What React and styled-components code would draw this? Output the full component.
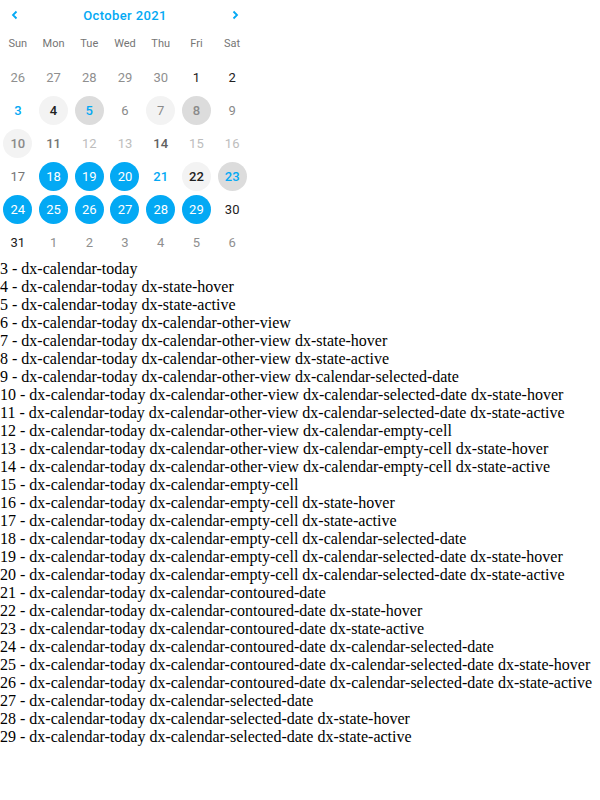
import { createGlobalStyle, styled } from "styled-components";

const GlobalStyle = createGlobalStyle`
  body {
    margin: 0;
    background: #fff;
  }
`;

const BLUE = "#03a9f4";

const weekDays = ["Sun", "Mon", "Tue", "Wed", "Thu", "Fri", "Sat"];

// each cell: [text, kind]
const kinds = {
  other: { color: "#8f8f8f" },
  normal: { color: "#212121" },
  today: { color: BLUE, bold: true },
  todayHover: { color: "#212121", bold: true, bg: "#f3f3f3" },
  todayActive: { color: BLUE, bold: true, bg: "#dcdcdc" },
  gray: { color: "#8a8a8a" },
  grayHover: { color: "#8a8a8a", bg: "#f3f3f3" },
  grayActive: { color: "#8a8a8a", bold: true, bg: "#dcdcdc" },
  grayBoldHover: { color: "#8a8a8a", bold: true, bg: "#f3f3f3" },
  grayBold: { color: "#757575", bold: true },
  empty: { color: "#bdbdbd" },
  darkGrayBold: { color: "#616161", bold: true },
  selected: { color: "#fff", bg: BLUE },
  contoured: { color: BLUE, bold: true },
  contouredHover: { color: "#212121", bold: true, bg: "#f3f3f3" },
  contouredActive: { color: BLUE, bold: true, bg: "#dcdcdc" },
  muted: { color: "#757575" },
};

const weeks = [
  [["26", "other"], ["27", "other"], ["28", "other"], ["29", "other"], ["30", "other"], ["1", "normal"], ["2", "normal"]],
  [["3", "today"], ["4", "todayHover"], ["5", "todayActive"], ["6", "gray"], ["7", "grayHover"], ["8", "grayActive"], ["9", "gray"]],
  [["10", "grayBoldHover"], ["11", "grayBold"], ["12", "empty"], ["13", "empty"], ["14", "darkGrayBold"], ["15", "empty"], ["16", "empty"]],
  [["17", "muted"], ["18", "selected"], ["19", "selected"], ["20", "selected"], ["21", "contoured"], ["22", "contouredHover"], ["23", "contouredActive"]],
  [["24", "selected"], ["25", "selected"], ["26", "selected"], ["27", "selected"], ["28", "selected"], ["29", "selected"], ["30", "normal"]],
  [["31", "normal"], ["1", "other"], ["2", "other"], ["3", "other"], ["4", "other"], ["5", "other"], ["6", "other"]],
];

const notes = [
  "3 - dx-calendar-today",
  "4 - dx-calendar-today dx-state-hover",
  "5 - dx-calendar-today dx-state-active",
  "6 - dx-calendar-today dx-calendar-other-view",
  "7 - dx-calendar-today dx-calendar-other-view dx-state-hover",
  "8 - dx-calendar-today dx-calendar-other-view dx-state-active",
  "9 - dx-calendar-today dx-calendar-other-view dx-calendar-selected-date",
  "10 - dx-calendar-today dx-calendar-other-view dx-calendar-selected-date dx-state-hover",
  "11 - dx-calendar-today dx-calendar-other-view dx-calendar-selected-date dx-state-active",
  "12 - dx-calendar-today dx-calendar-other-view dx-calendar-empty-cell",
  "13 - dx-calendar-today dx-calendar-other-view dx-calendar-empty-cell dx-state-hover",
  "14 - dx-calendar-today dx-calendar-other-view dx-calendar-empty-cell dx-state-active",
  "15 - dx-calendar-today dx-calendar-empty-cell",
  "16 - dx-calendar-today dx-calendar-empty-cell dx-state-hover",
  "17 - dx-calendar-today dx-calendar-empty-cell dx-state-active",
  "18 - dx-calendar-today dx-calendar-empty-cell dx-calendar-selected-date",
  "19 - dx-calendar-today dx-calendar-empty-cell dx-calendar-selected-date dx-state-hover",
  "20 - dx-calendar-today dx-calendar-empty-cell dx-calendar-selected-date dx-state-active",
  "21 - dx-calendar-today dx-calendar-contoured-date",
  "22 - dx-calendar-today dx-calendar-contoured-date dx-state-hover",
  "23 - dx-calendar-today dx-calendar-contoured-date dx-state-active",
  "24 - dx-calendar-today dx-calendar-contoured-date dx-calendar-selected-date",
  "25 - dx-calendar-today dx-calendar-contoured-date dx-calendar-selected-date dx-state-hover",
  "26 - dx-calendar-today dx-calendar-contoured-date dx-calendar-selected-date dx-state-active",
  "27 - dx-calendar-today dx-calendar-selected-date",
  "28 - dx-calendar-today dx-calendar-selected-date dx-state-hover",
  "29 - dx-calendar-today dx-calendar-selected-date dx-state-active",
];

const Chevron = ({ left }) => (
  <svg width="10" height="10" viewBox="0 0 10 10">
    <polyline
      points={left ? "6.5,1.5 3,5 6.5,8.5" : "3.5,1.5 7,5 3.5,8.5"}
      fill="none"
      stroke={BLUE}
      strokeWidth="1.8"
    />
  </svg>
);

export default function App() {
  return (
    <>
      <GlobalStyle />
      <Calendar>
        <Header>
          <NavButton>
            <Chevron left />
          </NavButton>
          <Caption>October 2021</Caption>
          <NavButton>
            <Chevron />
          </NavButton>
        </Header>
        <WeekRow>
          {weekDays.map((d) => (
            <WeekDay key={d}>{d}</WeekDay>
          ))}
        </WeekRow>
        <Grid>
          {weeks.map((week, wi) =>
            week.map(([text, kind], di) => {
              const k = kinds[kind];
              return (
                <Cell key={`${wi}-${di}`}>
                  <Day $color={k.color} $bold={k.bold} $bg={k.bg}>
                    {text}
                  </Day>
                </Cell>
              );
            })
          )}
        </Grid>
      </Calendar>
      <Notes>
        {notes.map((n) => (
          <div key={n}>{n}</div>
        ))}
      </Notes>
    </>
  );
}

const Calendar = styled.div`
  width: 250px;
  font-family: Roboto, "Noto Sans", sans-serif;
  user-select: none;
`;
const Header = styled.div`
  height: 30px;
  display: flex;
  align-items: center;
  justify-content: space-between;
`;
const NavButton = styled.div`
  width: 30px;
  height: 30px;
  display: flex;
  align-items: center;
  justify-content: center;
`;
const Caption = styled.div`
  color: ${BLUE};
  font-size: 13px;
  font-weight: 500;
  letter-spacing: 0.4px;
`;
const WeekRow = styled.div`
  display: grid;
  grid-template-columns: repeat(7, 1fr);
  height: 26px;
  align-items: center;
  margin-bottom: 5px;
`;
const WeekDay = styled.div`
  text-align: center;
  font-size: 11px;
  color: #757575;
`;
const Grid = styled.div`
  display: grid;
  grid-template-columns: repeat(7, 1fr);
  grid-auto-rows: 33px;
`;
const Cell = styled.div`
  display: flex;
  align-items: center;
  justify-content: center;
`;
const Day = styled.span`
  width: 29px;
  height: 29px;
  border-radius: 50%;
  display: flex;
  align-items: center;
  justify-content: center;
  font-size: 13px;
  color: ${(p) => p.$color};
  font-weight: ${(p) => (p.$bold ? 500 : 400)};
  background: ${(p) => p.$bg || "transparent"};
`;
const Notes = styled.div`
  margin-top: 1px;
  font-family: "Liberation Serif", "Times New Roman", serif;
  font-size: 16px;
  line-height: 18px;
  color: #000;
`;
